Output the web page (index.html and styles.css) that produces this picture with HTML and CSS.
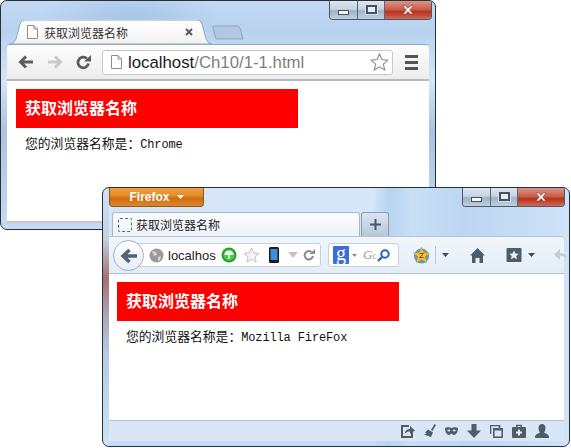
FILE: index.html
```html
<!DOCTYPE html>
<html lang="zh">
<head>
<meta charset="utf-8">
<title>获取浏览器名称</title>
<link rel="stylesheet" href="styles.css">
</head>
<body>
<div class="desktop">

<section class="win chrome-win">
  <div class="caption">
    <div class="controls">
      <span class="ctl ctl-min"><i></i></span>
      <span class="ctl ctl-max"><i></i></span>
      <span class="ctl ctl-close"><svg width="12" height="10" viewBox="0 0 12 10"><path d="M1 1h2.6L6 3.4 8.4 1H11L7.6 5 11 9H8.4L6 6.6 3.6 9H1l3.4-4z" fill="#fff" stroke="#6b3a32" stroke-width=".5"/></svg></span>
    </div>
  </div>
  <div class="c-tabs">
    <svg class="c-tab-bg" width="240" height="24" viewBox="0 0 240 24">
      <defs><linearGradient id="ct" x1="0" y1="0" x2="0" y2="1"><stop offset="0" stop-color="#fff"/><stop offset="1" stop-color="#f2f2f2"/></linearGradient></defs>
      <path d="M203 6h24q2 0 3 2l3 11h-27l-3-11q-.5-2 0-2z" fill="#b2c8e2" stroke="#8ea6c2"/>
      <path d="M0 24q4 0 6-5l4-15q1-4 5-4h172q4 0 5 4l4 15q2 5 6 5z" fill="url(#ct)" stroke="#9aa7b5"/>
    </svg>
    <div class="c-tab">
      <svg class="i" width="11" height="14" viewBox="0 0 11 14"><path d="M.5.5h6.5l3.500 3.500v9.500h-10z M7 .5v3.500h3.500" fill="#fff" stroke="#8d8d8d"/></svg>
      <span class="c-tab-title">获取浏览器名称</span>
      <svg class="c-tab-x" width="8" height="8" viewBox="0 0 8 8"><path d="M1 1l6 6M7 1l-6 6" stroke="#555" stroke-width="1.800"/></svg>
    </div>
  </div>
  <div class="c-toolbar">
    <svg class="c-nav" width="16" height="14" viewBox="0 0 16 14"><path d="M15 7H4M8 1.500 2.500 7 8 12.500" fill="none" stroke="#5c5c5c" stroke-width="3"/></svg>
    <svg class="c-nav c-fwd" width="16" height="14" viewBox="0 0 16 14"><path d="M1 7h11M8 1.500 13.500 7 8 12.500" fill="none" stroke="#c9c9c9" stroke-width="3"/></svg>
    <svg class="c-nav c-rel" width="15" height="15" viewBox="0 0 15 15"><path d="M12.500 8.500A5.300 5.300 0 1 1 10.800 3.500" fill="none" stroke="#5c5c5c" stroke-width="2.800"/><path d="M8 6.500h7V0z" fill="#5c5c5c"/></svg>
    <div class="omni">
      <svg class="i" width="11" height="14" viewBox="0 0 11 14"><path d="M.5.500h6.500l3.500 3.500v9.500h-10z M7 .5v3.500h3.500" fill="#fff" stroke="#8d8d8d"/></svg>
      <span class="omni-text">localhost<span class="omni-dim">/Ch10/1-1.html</span></span>
      <svg class="omni-star" width="19" height="18" viewBox="0 0 19 18"><path d="M9.500 1l2.400 5.500 6 .6-4.500 4 1.300 5.900-5.200-3.100-5.200 3.100 1.300-5.900-4.500-4 6-.6z" fill="#fff" stroke="#8c8c8c" stroke-width="1.100"/></svg>
    </div>
    <div class="menu"><i></i><i></i><i></i></div>
  </div>
  <div class="page c-page">
    <h1 class="banner">获取浏览器名称</h1>
    <p class="line">您的浏览器名称是：<code>Chrome</code></p>
  </div>
</section>

<section class="win ff-win">
  <div class="caption ff-caption">
    <button class="ff-btn">Firefox<svg width="7" height="4" viewBox="0 0 7 4"><path d="M0 0h7L3.500 4z" fill="#fff"/></svg></button>
    <div class="controls">
      <span class="ctl ctl-min"><i></i></span>
      <span class="ctl ctl-max"><i></i></span>
      <span class="ctl ctl-close"><svg width="12" height="10" viewBox="0 0 12 10"><path d="M1 1h2.6L6 3.400 8.400 1H11L7.600 5 11 9H8.400L6 6.600 3.600 9H1l3.400-4z" fill="#fff" stroke="#6b3a32" stroke-width=".5"/></svg></span>
    </div>
  </div>
  <div class="f-tabs">
    <div class="f-tab">
      <span class="f-tab-icon"></span>
      <span class="f-tab-title">获取浏览器名称</span>
    </div>
    <div class="f-new"><svg width="11" height="11" viewBox="0 0 11 11"><path d="M5.500 0v11M0 5.500h11" stroke="#4a5563" stroke-width="2"/></svg></div>
  </div>
  <div class="f-toolbar">
    <div class="f-back"><svg width="18" height="16" viewBox="0 0 18 16"><path d="M17 8H5M9.500 2 3 8l6.500 6" fill="none" stroke="#4f6379" stroke-width="3.400"/></svg></div>
    <div class="f-url">
      <svg width="15" height="15" viewBox="0 0 15 15"><circle cx="7.500" cy="7.500" r="7" fill="#9a9a9a"/><path d="M3 3l4 1 1 3-3 1zM9 9l3-1-1 4-2 1z" fill="#d6d6d6"/></svg>
      <span class="f-url-text">localhos</span>
      <svg class="f-green" width="16" height="16" viewBox="0 0 16 16"><circle cx="8" cy="8" r="7.500" fill="#27a327"/><circle cx="8" cy="8" r="5.500" fill="#4cc84c"/><path d="M3.500 8A4.500 4.500 0 0 1 12.500 8zM7.300 8h1.400v4H7.300z" fill="#fff"/></svg>
      <svg class="f-star" width="17" height="16" viewBox="0 0 17 16"><path d="M8.500 1l2.200 4.800 5.300.6-4 3.500 1.200 5.100-4.700-2.700-4.700 2.700 1.200-5.100-4-3.500 5.300-.6z" fill="#f4f4f4" stroke="#c2c2c2"/></svg>
      <svg class="f-phone" width="10" height="16" viewBox="0 0 10 16"><rect width="10" height="16" rx="1.500" fill="#1c1c1c"/><rect x="1.500" y="2" width="7" height="11" fill="#3c8fd8"/></svg>
      <svg class="f-drop" width="10" height="6" viewBox="0 0 10 6"><path d="M0 0h10L5 6z" fill="#c4c4c4"/></svg>
      <svg class="f-reload" width="12" height="12" viewBox="0 0 12 12"><path d="M10 7a4.200 4.200 0 1 1-1.500-4" fill="none" stroke="#8a8a8a" stroke-width="2"/><path d="M6.500 5H12V0z" fill="#8a8a8a"/></svg>
    </div>
    <div class="f-search">
      <span class="g-badge">g</span>
      <svg class="g-caret" width="5" height="3" viewBox="0 0 5 3"><path d="M0 0h5L2.500 3z" fill="#8c8c8c"/></svg>
      <span class="g-text">G<span class="g-clip">c</span></span>
      <svg class="g-mag" width="13" height="13" viewBox="0 0 13 13"><circle cx="8" cy="5" r="3.700" fill="none" stroke="#2467b3" stroke-width="2"/><path d="M5.500 7.500 1 12" stroke="#2467b3" stroke-width="2.400"/></svg>
    </div>
    <svg class="f-badge" width="17" height="17" viewBox="0 0 17 17"><circle cx="8.500" cy="9" r="7.500" fill="#5d9cc0"/><path d="M8.500 0l2.400 5.600 5.600.4-4.300 3.800 1.500 6-5.200-3.200-5.200 3.200 1.500-6L.5 6l5.600-.4z" fill="#eec33a" stroke="#c28b2b" stroke-width=".5"/><path d="M6.500 6.500h4l-4 4h4" fill="none" stroke="#c23a22" stroke-width="1"/></svg>
    <span class="f-sep"></span>
    <svg class="f-caret" width="7" height="4" viewBox="0 0 7 4"><path d="M0 0h7L3.500 4z" fill="#3f4a57"/></svg>
    <svg class="f-home" width="15" height="15" viewBox="0 0 15 15"><path d="M7.500 0 15 7.500h-2V15H9.500v-5h-4v5H2V7.500H0z" fill="#4f5d6b"/></svg>
    <svg class="f-books" width="16" height="14" viewBox="0 0 15 14"><rect width="15" height="14" rx="1" fill="#4f5d6b"/><path d="M7.500 2.500l1.500 3 3.200.3-2.400 2.200.7 3.200-3-1.700-3 1.700.7-3.200-2.400-2.200L6 5.500z" fill="#e8eef5"/></svg>
    <svg class="f-caret f-caret2" width="7" height="4" viewBox="0 0 7 4"><path d="M0 0h7L3.500 4z" fill="#3f4a57"/></svg>
    <svg class="f-next" width="13" height="14" viewBox="0 0 13 14"><path d="M13 10C12 6 9 5 6 5V1L0 6.500 6 12V8c3 0 5 .5 7 2z" fill="#c5ccd4"/></svg>
  </div>
  <div class="page f-page">
    <h1 class="banner">获取浏览器名称</h1>
    <p class="line">您的浏览器名称是：<code>Mozilla FireFox</code></p>
  </div>
  <div class="f-status">
    <svg width="14" height="14" viewBox="0 0 14 14"><path d="M8 2H1v11h10V8" fill="none" stroke="#4f5d6b" stroke-width="2"/><path d="M3.500 10C4 6.500 6 5 9 5V2l5 4.500L9 10V7.500C7 7.500 5 8 3.500 10z" fill="#4f5d6b"/></svg>
    <svg width="12" height="14" viewBox="0 0 12 14"><path d="M7 6l3.500-6 1.500 1-3.500 6z" fill="#4f5d6b"/><path d="M4 5.500 9 8.500 7 13 0 10.500l2.500-1L1 8.500z" fill="#4f5d6b"/></svg>
    <svg width="13" height="8" viewBox="0 0 13 8"><path d="M0 1c3-1.500 4.500 0 6.500 0S10 -.5 13 1c0 4-2 7-4 7-1.500 0-2-1.500-2.500-1.500S5.500 8 4 8C2 8 0 5 0 1z" fill="#4f5d6b"/><ellipse cx="3.800" cy="3.500" rx="1.500" ry="1" fill="#d8e6f5"/><ellipse cx="9.200" cy="3.500" rx="1.500" ry="1" fill="#d8e6f5"/></svg>
    <svg width="14" height="14" viewBox="0 0 14 14"><path d="M4.500 0h5v6.500H14L7 14 0 6.500h4.500z" fill="#4f5d6b"/></svg>
    <svg width="13" height="13" viewBox="0 0 13 13"><path d="M.5 9V.5h9V3" fill="none" stroke="#4f5d6b" stroke-width="1.600"/><rect x="3.800" y="3.800" width="8.400" height="8.400" fill="none" stroke="#4f5d6b" stroke-width="1.600"/><path d="M3 3h10v2.500H3z" fill="#4f5d6b"/></svg>
    <svg width="14" height="14" viewBox="0 0 14 14"><path d="M4 3V.8h6V3h3a1 1 0 0 1 1 1v9a1 1 0 0 1-1 1H1a1 1 0 0 1-1-1V4a1 1 0 0 1 1-1zm1.500 0h3V2h-3z" fill="#4f5d6b"/><path d="M6 5.500h2v2h2v2H8v2H6v-2H4v-2h2z" fill="#e8eef5"/></svg>
    <svg width="14" height="14" viewBox="0 0 14 14"><path d="M7 0c2.300 0 3.500 1.800 3.500 4S9.500 8 9 8.500c1 1 5 1.500 5 4.500v1H0v-1c0-3 4-3.500 5-4.500C4.500 8 3.500 6.200 3.500 4S4.700 0 7 0z" fill="#4f5d6b"/></svg>
  </div>
</section>

</div>
</body>
</html>
```

FILE: styles.css
```css
* { box-sizing: border-box; }
html, body { margin: 0; padding: 0; background: #fff; }
.desktop { position: relative; width: 571px; height: 448px; overflow: hidden; background: #fff; }

.win { position: absolute; display: flex; flex-direction: column; border: 1px solid #27313b; border-radius: 7px; overflow: hidden; }
.chrome-win {
  left: 0; top: 0; width: 436px; height: 230px; padding: 0 6px 6px;
  background:
    radial-gradient(90px 26px at 130px 14px, #a9c6e6, transparent),
    linear-gradient(180deg, #c3d9f3 0, #b7d2ef 30px, #d3e6fa 80px, #a9c3e0 130px, #c6dcf4 230px);
}
.ff-win {
  left: 102px; top: 187px; width: 468px; height: 260px; padding: 0 5px 5px 6px;
  background:
    linear-gradient(180deg, #cfe2f6 0, #c3d3e4 50px, #a86f72 90px, #a9a9ba 130px, #b4cbe4 165px, #cfe2f7 260px) left / 6px 100% no-repeat,
    linear-gradient(90deg, transparent 270px, #b7d3ef 285px, #c9dff6 310px, #bcd6f2 360px, #cfe3f9 100%),
    linear-gradient(180deg, #d7e7f8, #c4dcf5);
}

.caption { height: 19px; display: flex; justify-content: flex-end; flex: none; }
.ff-caption { height: 24px; justify-content: space-between; align-items: flex-start; }
.controls { display: flex; height: 19px; margin-right: -3px; border: 1px solid #4c5866; border-top: 0; border-radius: 0 0 4px 4px; overflow: hidden; flex: none; margin-top: 0; }
.ff-win .controls { margin-right: -1px; }
.ctl { display: flex; align-items: center; justify-content: center; background: linear-gradient(180deg, #dce6f0 0, #c5d4e3 45%, #9fb3c7 55%, #bfd0e0 100%); border-right: 1px solid #5a6674; }
.ctl-min { width: 28px; }
.ctl-max { width: 27px; }
.ctl-close { width: 46px; border-right: 0; background: linear-gradient(180deg, #d9958a 0, #c9604e 45%, #b8321f 60%, #cf6a55 100%); }
.ctl-min i { display: block; width: 11px; height: 5px; margin-top: 5px; background: #f4f7fa; border: 1px solid #48525e; }
.ctl-max i { display: block; width: 11px; height: 9px; margin-top: -2px; border: 2px solid #48525e; background: #e6edf4; outline: 1px solid #d7e0ea; }

/* Chrome */
.c-tabs { position: relative; height: 24px; flex: none; }
.c-tab-bg { position: absolute; left: 3px; top: 0; }
.c-tab { position: relative; display: flex; align-items: center; height: 24px; padding: 0 0 0 20px; width: 203px; }
.c-tab-title { font: 12px "Noto Sans CJK SC", sans-serif; color: #333; margin-left: 6px; }
.c-tab-x { margin-left: 57px; }
.i { flex: none; display: block; }
.c-toolbar { display: flex; align-items: center; height: 37px; flex: none; padding-left: 11px; background: linear-gradient(180deg, #fdfdfd, #ececec); border: 1px solid #a6afb9; border-top-color: #9aa7b5; border-bottom: 2px solid #b8b8b8; border-left: 0; border-right: 0; border-radius: 3px 3px 0 0; }
.c-nav { flex: none; }
.c-fwd { margin-left: 13px; }
.c-rel { margin-left: 13px; }
.omni { display: flex; align-items: center; width: 291px; height: 25px; margin-left: 11px; padding: 0 3px 0 8px; background: #fff; border: 1px solid #c9c9c9; border-radius: 3px; }
.omni-text { margin-left: 6px; font: 16.800px/25px "Liberation Sans", sans-serif; color: #1b1b1b; white-space: nowrap; }
.omni-dim { color: #7d7d7d; }
.omni-star { margin-left: auto; }
.menu { display: flex; flex-direction: column; gap: 3px; margin-left: 12px; }
.menu i { display: block; width: 13px; height: 3px; background: #555; }
.page { background: #fff; flex: 1; min-height: 0; }
.c-page { padding: 8px 0 0 9px; border-bottom: 2px solid #c4c9cf; }
.f-page { padding: 8px 0 0 8px; }
.banner { margin: 0; width: 282px; height: 39px; padding-left: 9px; background: #f00; color: #fff; font: 700 16px/37px "Noto Sans CJK SC", sans-serif; }
.line { margin: 7px 0 0; padding-left: 9px; height: 16px; font: 12.800px/16px "Noto Sans CJK SC", sans-serif; color: #111; white-space: nowrap; }
.line code { font: 12px/16px "Liberation Mono", monospace; letter-spacing: -.13px; }

/* Firefox */
.ff-btn { display: flex; align-items: center; justify-content: center; gap: 7px; width: 95px; height: 20px; margin: -1px 0 0; padding: 0; border: 1px solid #8a5a20; border-top: 0; border-radius: 0 0 4px 4px; background: linear-gradient(180deg, #f0a349 0, #e58a27 45%, #cf6d12 60%, #e0862d 100%); color: #fff; font: 700 12px "Liberation Sans", sans-serif; }
.f-tabs { display: flex; height: 24px; flex: none; padding-left: 3px; }
.f-tab { display: flex; align-items: center; width: 248px; height: 24px; padding-left: 5px; border: 1px solid #a9b8c8; border-bottom: 0; border-radius: 3px 3px 0 0; background: linear-gradient(180deg, #f9fbfe, #eef4fb); }
.f-tab-icon { width: 14px; height: 14px; border: 1px dashed #5a6672; border-radius: 2px; flex: none; }
.f-tab-title { margin-left: 4px; font: 12px "Noto Sans CJK SC", sans-serif; color: #222; }
.f-new { display: flex; align-items: center; justify-content: center; width: 28px; height: 24px; margin-left: 1px; border: 1px solid #8d9cad; border-bottom: 0; border-radius: 3px 3px 0 0; background: linear-gradient(180deg, #d7e5f3, #b8c8d9); }
.f-toolbar { display: flex; align-items: center; height: 38px; flex: none; position: relative; background: linear-gradient(180deg, #f1f6fc, #e4edf7); border-bottom: 1px solid #b3bfcc; border-top: 1px solid #b4c2d0; border-radius: 0 3px 0 0; }
.f-back { position: absolute; left: 4px; top: 3px; width: 31px; height: 31px; border-radius: 50%; display: flex; align-items: center; justify-content: center; background: linear-gradient(180deg, #fff, #e6eef6); border: 1px solid #9fb0c2; z-index: 1; }
.f-url { display: flex; align-items: center; width: 200px; height: 24px; margin-left: 12px; padding-left: 27px; background: #fff; border: 1px solid #c3d0dd; border-radius: 3px; flex: none; }
.f-url-text { margin-left: 4px; font: 13px "Liberation Sans", sans-serif; color: #222; }
.f-green { margin-left: 5px; flex: none; }
.f-star { margin-left: 6px; flex: none; }
.f-phone { margin-left: 9px; flex: none; }
.f-drop { margin-left: 9px; flex: none; }
.f-reload { margin-left: 5px; flex: none; }
.f-search { display: flex; align-items: center; width: 71px; height: 24px; margin-left: 7px; padding-left: 4px; background: #fff; border: 1px solid #c3d0dd; border-radius: 3px; flex: none; overflow: hidden; }
.g-badge { width: 16px; height: 18px; background: #3a6fd8; color: #fff; text-align: center; border-radius: 1px; font: 20px/14px "Liberation Serif", serif; flex: none; }
.g-caret { margin-left: 3px; flex: none; }
.g-text { margin-left: 6px; color: #9a9a9a; font: italic 13px "Liberation Serif", serif; width: 13px; overflow: hidden; white-space: nowrap; }
.g-clip { font-size: 10px; }
.g-mag { margin-left: 1px; flex: none; }
.f-badge { margin-left: 14px; flex: none; }
.f-sep { width: 1px; height: 18px; margin-left: 5px; background: #bcc7d2; flex: none; }
.f-caret { margin-left: 6px; flex: none; }
.f-home { margin-left: 21px; flex: none; }
.f-books { margin-left: 21px; flex: none; }
.f-caret2 { margin-left: 6px; }
.f-next { margin-left: 19px; flex: none; }
.f-status { display: flex; align-items: center; justify-content: flex-end; gap: 9px; height: 21px; flex: none; padding-right: 15px; background: #d8e6f5; border-top: 1px solid #b5c4d4; }
```
